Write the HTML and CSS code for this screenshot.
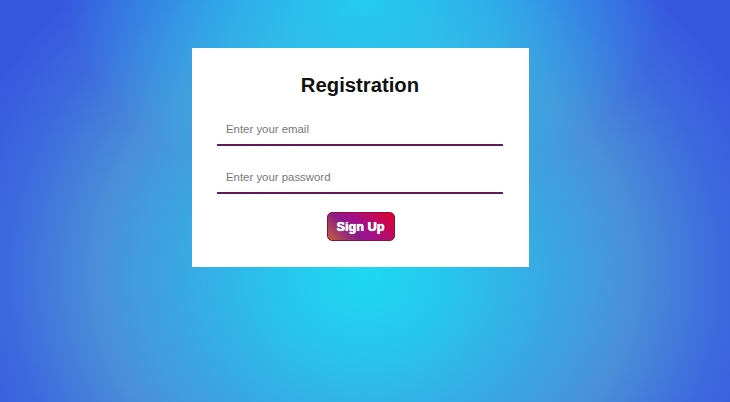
FILE: index.html
```html
<!DOCTYPE html>
<html>
<head>
<meta charset="utf-8">
<link rel="stylesheet" href="styles.css">
</head>
<body>
<div class="page">
  <form class="card">
    <h1 class="title">Registration</h1>
    <input class="field" type="email" placeholder="Enter your email">
    <input class="field field-second" type="password" placeholder="Enter your password">
    <button class="btn" type="button">Sign Up</button>
  </form>
</div>
</body>
</html>
```
FILE: styles.css
```css
html, body {
  margin: 0;
  height: 100%;
}
body {
  font-family: "Liberation Sans", Arial, sans-serif;
  background:
    radial-gradient(ellipse 300px 200px at 50% 0%, rgba(32, 212, 242, 0.9) 0%, rgba(32, 212, 242, 0.55) 45%, rgba(32, 212, 242, 0) 100%),
    radial-gradient(ellipse 58% 95% at 50% 68%, #1ed8f2 0%, #27c6ed 20%, #36ace4 40%, #4a90d8 63%, #3e6ade 84%, #3658e0 100%);
}
.page {
  height: 100%;
  box-sizing: border-box;
  padding: 48px 0 0 192px;
}
.card {
  width: 337px;
  box-sizing: border-box;
  background: #fff;
  padding: 26px 26px 26px 25px;
  display: flex;
  flex-direction: column;
}
.title {
  margin: 0;
  font-size: 20.3px;
  line-height: 23px;
  font-weight: bold;
  text-align: center;
  color: #111;
}
.field {
  margin-top: 16px;
  height: 33px;
  box-sizing: border-box;
  border: none;
  border-bottom: 2px solid #5f1a5a;
  padding: 0 9px;
  font-family: "Liberation Sans", Arial, sans-serif;
  font-size: 11.4px;
  outline: none;
  background: transparent;
}
.field::placeholder {
  color: #777;
}
.field-second {
  margin-top: 15px;
}
.btn {
  align-self: center;
  margin-top: 18px;
  margin-left: 1px;
  width: 68px;
  height: 29px;
  border: 1px solid #8a1238;
  border-radius: 5px;
  background: linear-gradient(45deg, #c0603a 0%, #8a1a8a 35%, #a0108a 50%, #e0002c 100%);
  color: #fff;
  font-family: "Liberation Sans", Arial, sans-serif;
  font-weight: bold;
  font-size: 12.5px;
  letter-spacing: 0.1px;
  text-shadow: 0 0 1px #fff, 0.3px 0 0 #fff;
  padding: 0;
  cursor: pointer;
}
```
